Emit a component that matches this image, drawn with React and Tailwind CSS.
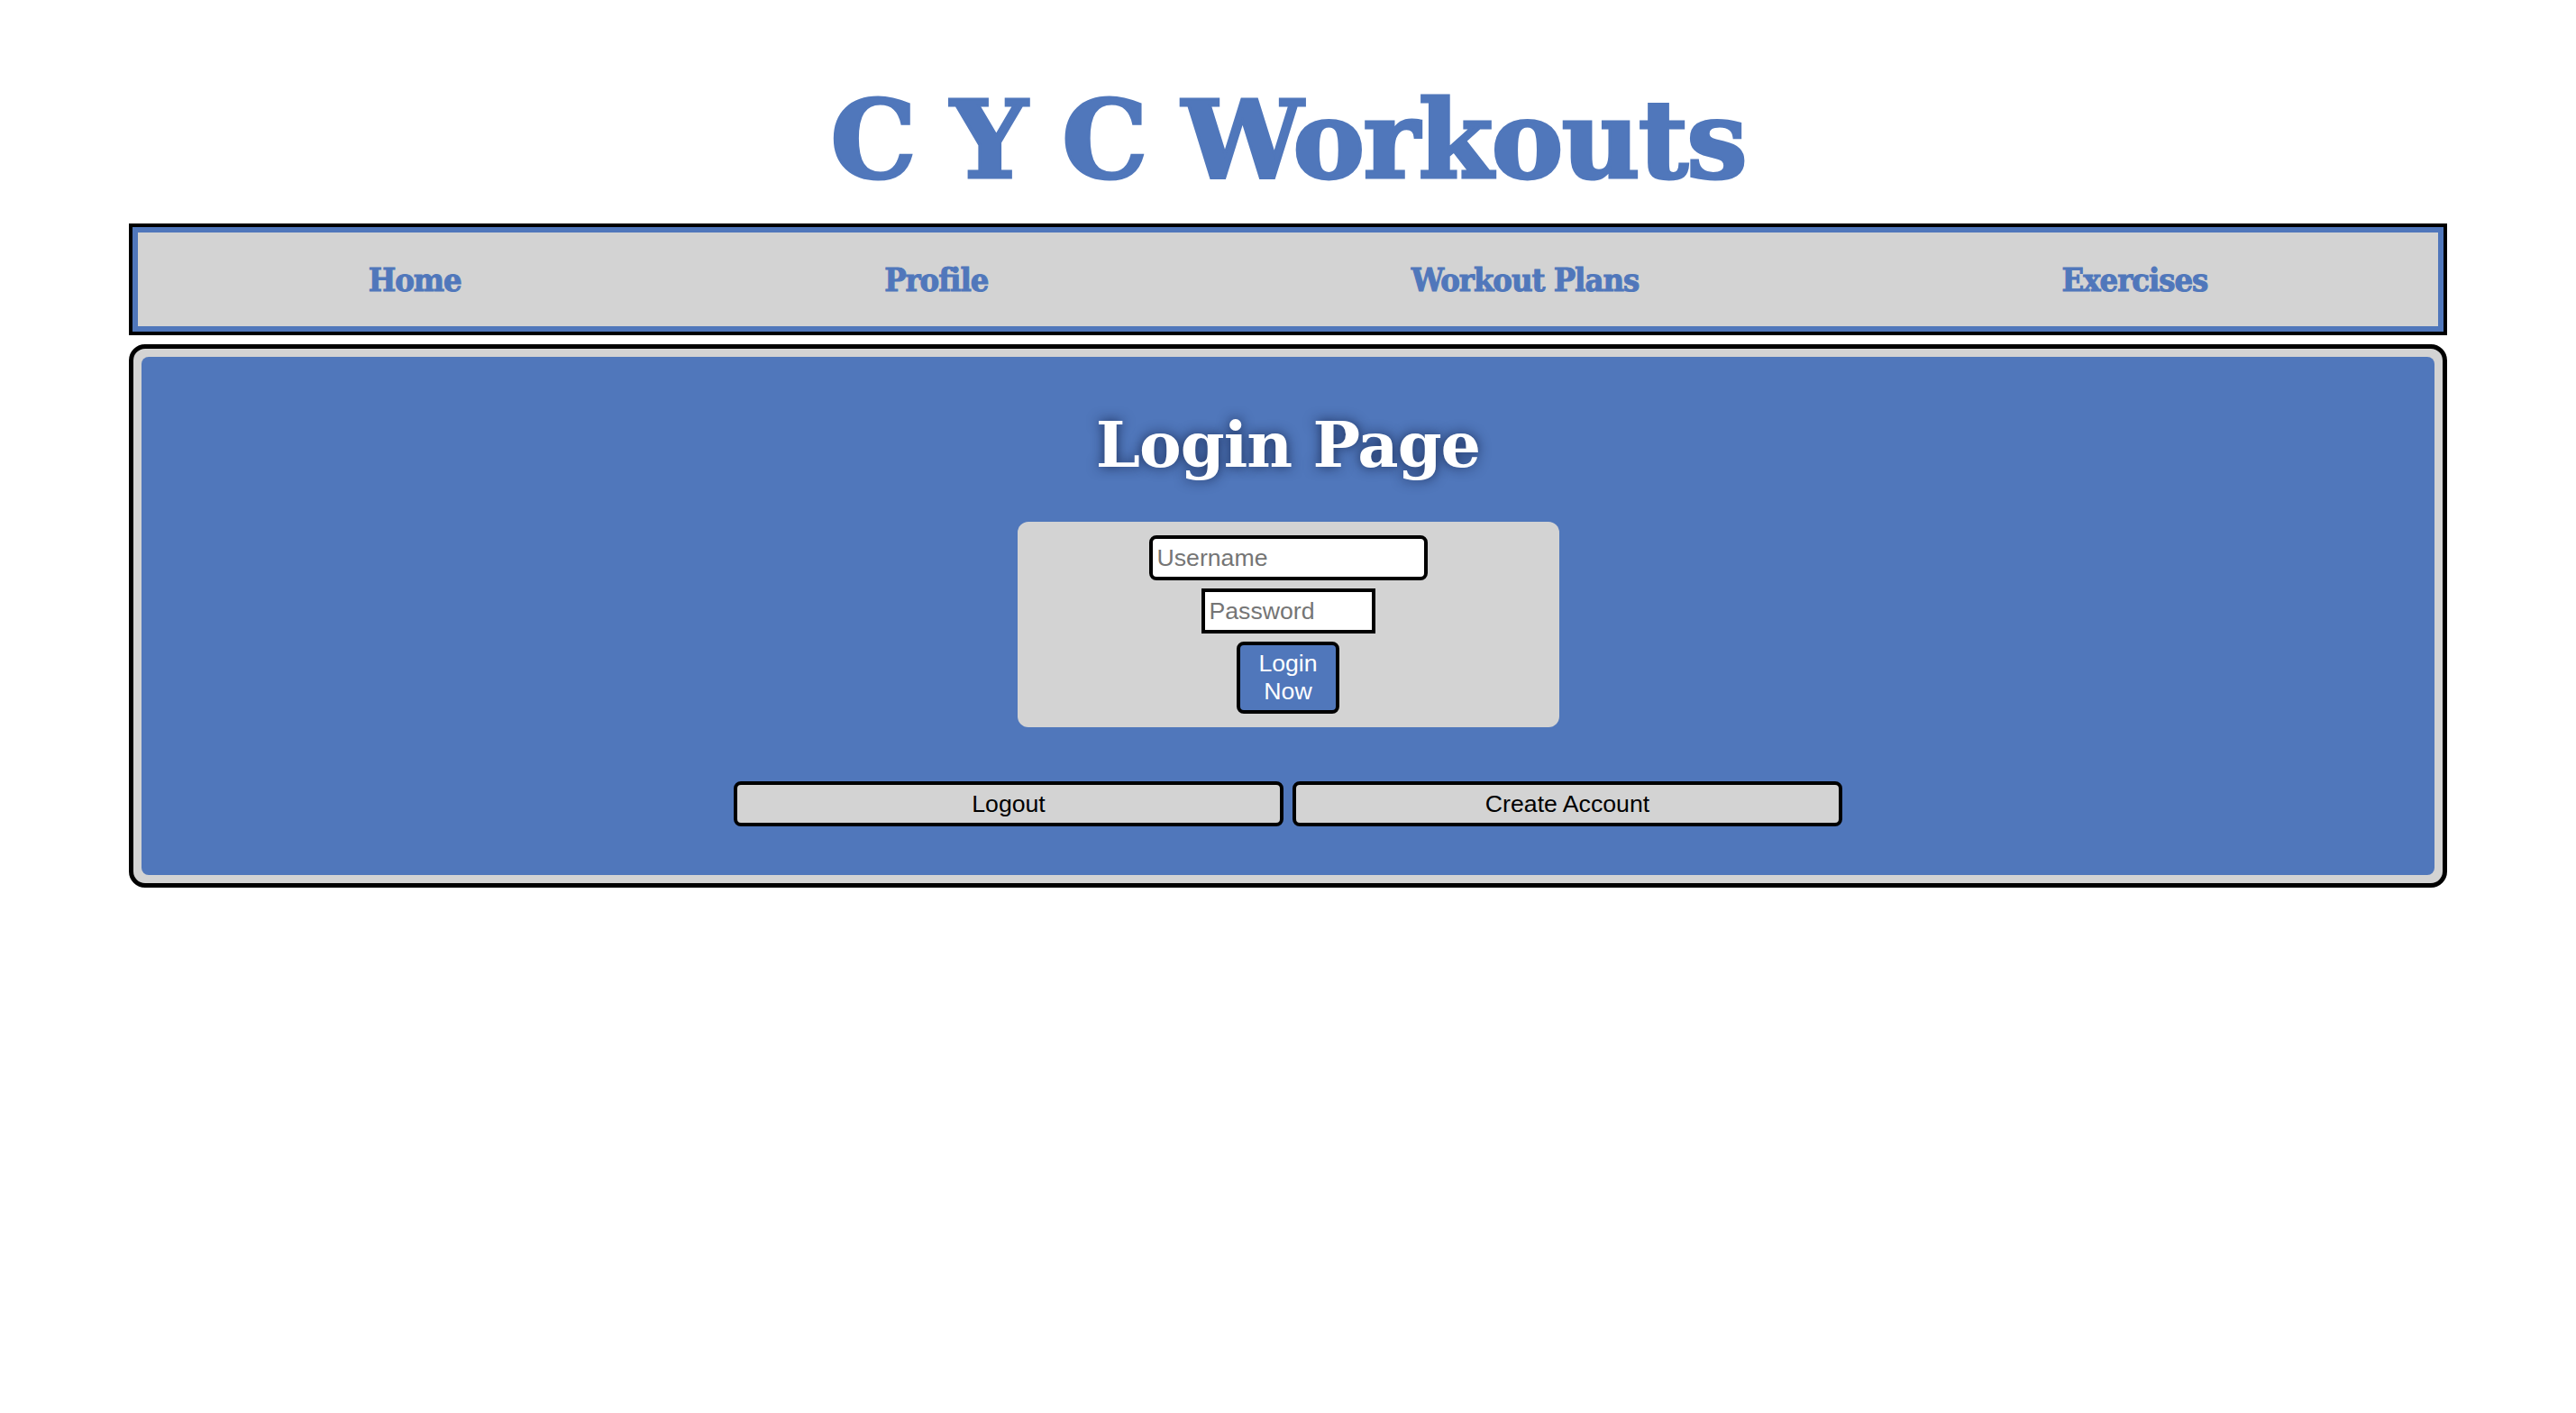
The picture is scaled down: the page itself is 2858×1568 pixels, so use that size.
export default function App() {
  const slab = { fontFamily: '"DejaVu Serif", "Liberation Serif", serif' };
  const sans = { fontFamily: '"Liberation Sans", Arial, sans-serif' };
  return (
    <div className="min-h-screen w-full bg-white">
      <div className="pt-[95px] flex justify-center">
        <h1
          style={slab}
          className="text-[120px] leading-[120px] font-bold text-[#5077bb] tracking-[-2px] [-webkit-text-stroke:3px_#5077bb]"
        >
          C Y C Workouts
        </h1>
      </div>

      <nav className="mx-auto mt-[33px] w-[90%] border-4 border-black">
        <div className="flex h-[116px] items-center justify-around border-[6px] border-[#5077bb] bg-[#d3d3d3] px-[21px]">
          {["Home", "Profile", "Workout Plans", "Exercises"].map((t) => (
            <a
              key={t}
              style={{ fontFamily: '"DejaVu Serif Condensed", "DejaVu Serif", serif' }}
              className="font-stretch-condensed text-[36px] font-bold text-[#5077bb] tracking-[-1px] [-webkit-text-stroke:1px_#5077bb]"
            >
              {t}
            </a>
          ))}
        </div>
      </nav>

      <main className="mx-auto mt-[10px] w-[90%] rounded-[18px] border-[5px] border-black bg-[#d3d3d3] p-[9px]">
        <div className="flex flex-col items-center rounded-[8px] bg-[#5077bb] pt-[63px] pb-[54px]">
          <h2
            style={slab}
            className="text-[70px] leading-[70px] font-bold text-white tracking-[-1px] [text-shadow:0_0_14px_rgba(20,35,75,0.9)]"
          >
            Login Page
          </h2>
          <div className="mt-[50px] flex w-[601px] flex-col items-center gap-[9px] rounded-[12px] bg-[#d3d3d3] py-[15px]">
            <input
              style={sans}
              placeholder="Username"
              className="h-[50px] w-[309px] rounded-[8px] border-4 border-black bg-white px-[5px] text-[26.67px] text-black outline-none placeholder:text-[#757575]"
            />
            <input
              style={sans}
              type="password"
              placeholder="Password"
              className="h-[50px] w-[193px] border-4 border-black bg-white px-[5px] text-[26.67px] text-black outline-none placeholder:text-[#757575]"
            />
            <button
              style={sans}
              className="h-[80px] w-[114px] rounded-[8px] border-4 border-black bg-[#5077bb] text-[26.67px] leading-[31px] text-white"
            >
              Login
              <br />
              Now
            </button>
          </div>
          <div className="mt-[60px] flex gap-[10px]">
            <button
              style={sans}
              className="h-[50px] w-[610px] rounded-[8px] border-4 border-black bg-[#d3d3d3] text-[26.67px] text-black"
            >
              Logout
            </button>
            <button
              style={sans}
              className="h-[50px] w-[610px] rounded-[8px] border-4 border-black bg-[#d3d3d3] text-[26.67px] text-black"
            >
              Create Account
            </button>
          </div>
        </div>
      </main>
    </div>
  );
}
